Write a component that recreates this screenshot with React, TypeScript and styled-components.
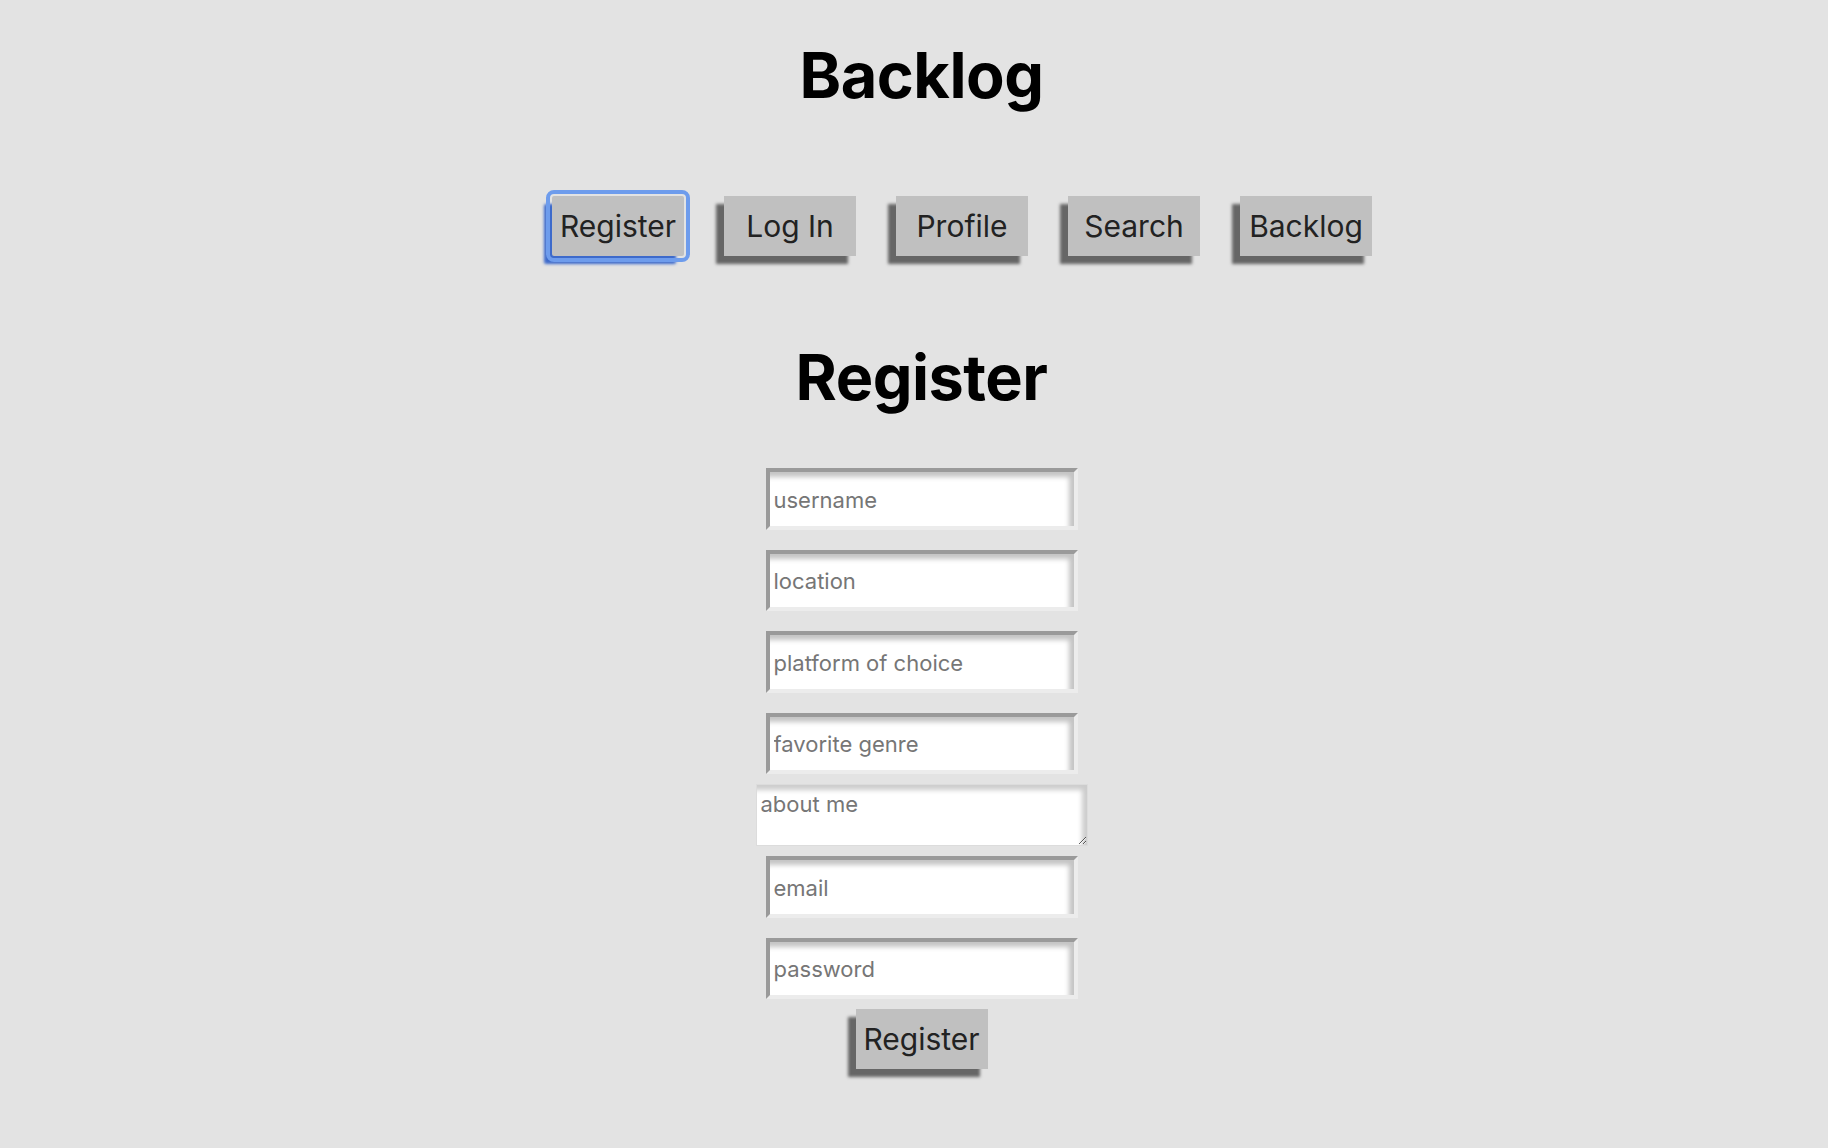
import React from 'react'
import styled, { createGlobalStyle } from 'styled-components'

const BG = '#e3e3e3'
const BUTTON_BG = '#c0c0c0'
const SHADOW = '#666666'
const FONT = `Inter, "Liberation Sans", "DejaVu Sans", sans-serif`

const GlobalStyle = createGlobalStyle`
  html, body {
    margin: 0;
    padding: 0;
    background: ${BG};
    font-family: ${FONT};
  }
`

const Page = styled.div`
  display: flex;
  flex-direction: column;
  align-items: center;
  min-height: 1148px;
  padding-left: 15px;
`

const Title = styled.h1`
  margin: 44px 0 0;
  font-size: 63px;
  line-height: 1;
  font-weight: 700;
  color: #000;
  letter-spacing: -0.5px;
`

const Nav = styled.nav`
  display: flex;
  gap: 40px;
  margin-top: 89px;
  padding-left: 81px;
`

const NavButton = styled.button<{ $focused?: boolean }>`
  width: 132px;
  height: 60px;
  padding: 0;
  border: none;
  border-radius: ${({ $focused }) => ($focused ? '2px' : '0')};
  background: ${BUTTON_BG};
  color: #222;
  font-family: ${FONT};
  font-size: 30px;
  cursor: pointer;
  box-shadow: -8px 8px 3px ${({ $focused }) => ($focused ? '#3d6acb' : SHADOW)};
  outline: ${({ $focused }) => ($focused ? '4px solid #6e9cec' : 'none')};
  outline-offset: 2px;
`

const SectionTitle = styled(Title)`
  margin-top: 90px;
`

const Form = styled.form`
  display: flex;
  flex-direction: column;
  align-items: center;
  margin-top: 49px;
`

const Field = styled.input`
  box-sizing: border-box;
  width: 312px;
  height: 61.5px;
  margin: 10px 0;
  padding: 2px 4px 0;
  border-width: 4px;
  border-style: solid;
  border-color: #9a9a9a #ececec #ececec #9a9a9a;
  background: #fff;
  box-shadow: inset -5px 5px 5px #c4c4c4;
  font-family: ${FONT};
  font-size: 22px;
  color: #222;

  &::placeholder {
    color: #767676;
  }
`

const AboutField = styled.textarea`
  box-sizing: border-box;
  width: 332px;
  height: 62px;
  margin: 0;
  padding: 6px 4px 4px;
  border: 1px solid #dcdcdc;
  background: #fff;
  box-shadow: inset -5px 5px 5px #cccccc;
  font-family: ${FONT};
  font-size: 22px;
  line-height: 1.2;
  color: #222;
  resize: both;

  &::placeholder {
    color: #767676;
  }
`

const SubmitButton = styled(NavButton)`
  margin-top: 0;
`

const NAV_ITEMS = ['Register', 'Log In', 'Profile', 'Search', 'Backlog']
const FIELDS = ['username', 'location', 'platform of choice', 'favorite genre']
const ACCOUNT_FIELDS = [
  { name: 'email', type: 'email' },
  { name: 'password', type: 'password' },
]

const App: React.FC = () => {
  return (
    <Page>
      <GlobalStyle />
      <Title>Backlog</Title>

      <Nav>
        {NAV_ITEMS.map((item, i) => (
          <NavButton key={item} $focused={i === 0}>
            {item}
          </NavButton>
        ))}
      </Nav>

      <SectionTitle>Register</SectionTitle>

      <Form onSubmit={(e) => e.preventDefault()}>
        {FIELDS.map((f) => (
          <Field key={f} type="text" placeholder={f} />
        ))}
        <AboutField placeholder="about me" />
        {ACCOUNT_FIELDS.map((f) => (
          <Field key={f.name} type={f.type} placeholder={f.name} />
        ))}
        <SubmitButton type="submit">Register</SubmitButton>
      </Form>
    </Page>
  )
}

export default App
